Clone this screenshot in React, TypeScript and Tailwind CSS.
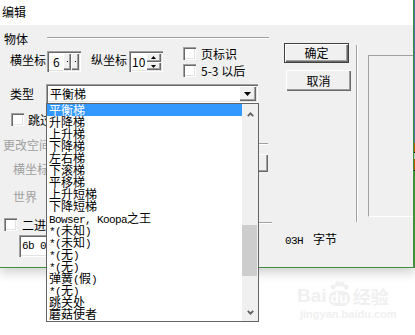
import React from "react";

const SUNKEN =
  "shadow-[inset_1px_1px_0_#a0a0a0,inset_2px_2px_0_#696969,inset_-1px_-1px_0_#ffffff,inset_-2px_-2px_0_#e3e3e3]";
const RAISED =
  "shadow-[inset_1px_1px_0_#ffffff,inset_-1px_-1px_0_#696969,inset_-2px_-2px_0_#a0a0a0]";
const MONO = "font-['Liberation_Mono',monospace] text-[11px] tracking-[-0.6px]";

function Mix({ s }: { s: string }) {
  const parts = s.match(/[\x20-\x7e]+|[^\x20-\x7e]+/g) || [];
  return (
    <>
      {parts.map((p, i) =>
        /^[\x20-\x7e]+$/.test(p) ? (
          <span key={i} className={`${MONO} whitespace-pre`}>
            {p}
          </span>
        ) : (
          <span key={i}>{p}</span>
        )
      )}
    </>
  );
}

function Check() {
  return <div className={`w-[13px] h-[13px] bg-white shrink-0 ${SUNKEN}`} />;
}

function Etch({ className }: { className: string }) {
  return (
    <div
      className={`h-[2px] border-t border-t-[#a0a0a0] border-b border-b-white ${className}`}
    />
  );
}

const ITEMS = [
  "平衡梯",
  "升降梯",
  "上升梯",
  "下降梯",
  "左右梯",
  "下滚梯",
  "平移梯",
  "上升短梯",
  "下降短梯",
  "Bowser, Koopa之王",
  "*(未知)",
  "*(未知)",
  "*(无)",
  "*(无)",
  "弹簧(假)",
  "*(无)",
  "跳关处",
  "蘑菇使者",
];

export default function App() {
  return (
    <div className="w-[415px] h-[335px] bg-white relative overflow-hidden font-['Noto_Sans_CJK_SC',sans-serif] text-[12px] text-black">
      {/* dialog */}
      <div className="flex h-[268px] w-[415px] shadow-[0_5px_10px_rgba(0,0,0,0.18)]">
        <div className="w-[413px] flex flex-col border-b border-b-[#3f8f3f]">
          {/* title */}
          <div className="h-[25px] bg-white pl-[2px] pt-[5px] leading-[14px]">编辑</div>
          {/* body */}
          <div className="flex-1 bg-[#f0f0f0] flex flex-col">
            {/* top zone */}
            <div className="h-[193px] flex items-start">
              {/* left panel */}
              <div className="w-[284px] flex flex-col">
                <div className="mt-[8px] h-[12px] flex items-start">
                  <span className="ml-[4px] leading-[12px]">物体</span>
                  <Etch className="flex-1 ml-[19px] mr-[15px] mt-[4px]" />
                </div>
                <div className="mt-[2px] h-[30px] flex items-start">
                  <span className="ml-[10px] mt-[7px] leading-[12px]">横坐标</span>
                  <div className={`ml-[1px] mt-[4px] w-[34px] h-[21px] bg-white flex items-center ${SUNKEN}`}>
                    <span className="ml-[6px] flex-1 leading-[12px]">6</span>
                    <div className="flex h-[17px] mr-[2px]">
                      <div className={`w-[8px] h-full bg-[#f0f0f0] flex items-center justify-center ${RAISED}`}>
                        <div className="w-[1px] h-[1px] bg-black" />
                      </div>
                      <div className={`w-[8px] h-full bg-[#f0f0f0] flex items-center justify-center ${RAISED}`}>
                        <div className="w-[1px] h-[1px] bg-black" />
                      </div>
                    </div>
                  </div>
                  <span className="ml-[10px] mt-[7px] leading-[12px]">纵坐标</span>
                  <div className={`ml-[2px] mt-[4px] w-[34px] h-[21px] bg-white flex items-center ${SUNKEN}`}>
                    <span className="ml-[3px] flex-1 leading-[12px]">10</span>
                    <div className="flex flex-col w-[15px] h-[17px] mr-[2px]">
                      <div className={`h-[9px] bg-[#f0f0f0] flex items-center justify-center ${RAISED}`}>
                        <svg width="5" height="3" viewBox="0 0 5 3">
                          <polygon points="0,3 5,3 2.5,0" fill="#000" />
                        </svg>
                      </div>
                      <div className={`h-[8px] bg-[#f0f0f0] flex items-center justify-center ${RAISED}`}>
                        <svg width="5" height="3" viewBox="0 0 5 3">
                          <polygon points="0,0 5,0 2.5,3" fill="#000" />
                        </svg>
                      </div>
                    </div>
                  </div>
                  <div className="ml-[20px] flex flex-col">
                    <div className="h-[13px] flex items-center">
                      <Check />
                      <span className="ml-[5px] leading-[13px]">页标识</span>
                    </div>
                    <div className="mt-[4px] h-[13px] flex items-center">
                      <Check />
                      <span className="ml-[5px] leading-[13px]">5-3 以后</span>
                    </div>
                  </div>
                </div>
                <div className="mt-[7px] h-[19px] flex items-center">
                  <span className="ml-[10px] leading-[12px]">类型</span>
                  <div className={`ml-[12px] w-[212px] h-[19px] bg-white flex items-center ${SUNKEN}`}>
                    <span className="ml-[4px] flex-1 leading-[12px]">平衡梯</span>
                    <div className={`w-[17px] h-[15px] mr-[2px] bg-[#f0f0f0] flex items-center justify-center ${RAISED}`}>
                      <svg width="7" height="4" viewBox="0 0 7 4">
                        <polygon points="0,0 7,0 3.5,4" fill="#000" />
                      </svg>
                    </div>
                  </div>
                </div>
                <div className="mt-[10px] h-[13px] flex items-center">
                  <div className="ml-[11px]">
                    <Check />
                  </div>
                  <span className="ml-[4px] leading-[13px] whitespace-nowrap">跳过此物体</span>
                </div>
                <div className="mt-[13px] h-[12px] flex items-start">
                  <span className="ml-[3px] leading-[12px] text-[#a0a0a0] whitespace-nowrap">更改空间位置</span>
                  <Etch className="flex-1 ml-[4px] mr-[16px] mt-[4px]" />
                </div>
                <div className="mt-[3px] h-[22px] flex items-start">
                  <span className="ml-[13px] mt-[9px] leading-[12px] text-[#a0a0a0]">横坐标</span>
                  <div className="flex-1" />
                  <div className={`w-[10px] h-[18px] mr-[16px] bg-[#f0f0f0] ${RAISED}`} />
                </div>
                <div className="mt-[15px] h-[12px] flex">
                  <span className="ml-[13px] leading-[12px] text-[#a0a0a0]">世界</span>
                </div>
              </div>
              {/* buttons */}
              <div className="w-[72px] flex flex-col">
                <div className="mt-[18px] w-[65px] h-[20px] border border-[#404040] bg-[#f0f0f0] flex items-center justify-center leading-[12px] shadow-[inset_1px_1px_0_#ffffff,inset_-1px_-1px_0_#696969,inset_-2px_-2px_0_#a0a0a0]">
                  确定
                </div>
                <div className={`mt-[7px] ml-[2px] w-[65px] h-[21px] bg-[#f0f0f0] flex items-center justify-center leading-[12px] ${RAISED}`}>
                  取消
                </div>
              </div>
              {/* separator */}
              <div className="w-[2px] mt-[20px] h-[177px] border-l border-l-[#a0a0a0] border-r border-r-white" />
              {/* right group */}
              <div className="flex-1 ml-[10px] mt-[30px] h-[162px] border-t border-t-[#a0a0a0] border-l border-l-[#a0a0a0] border-b border-b-white" />
            </div>
            {/* bottom zone */}
            <div className="flex flex-col">
              <div className="h-[13px] flex items-start">
                <div className="ml-[4px]">
                  <Check />
                </div>
                <span className="ml-[5px] leading-[13px] whitespace-nowrap">二进制数据</span>
                <Etch className="flex-1 ml-[4px] mr-[141px] mt-[4px]" />
              </div>
              <div className="mt-[4px] flex items-start">
                <div className={`ml-[19px] w-[230px] h-[22px] bg-white flex items-center ${SUNKEN}`}>
                  <span className={`ml-[3px] ${MONO} leading-[12px] whitespace-pre`}>6b 03 00 00</span>
                </div>
                <div className="ml-[36px] mt-[-2px] flex items-baseline leading-[12px]">
                  <span className={`${MONO}`}>03H</span>
                  <span className="ml-[10px]">字节</span>
                </div>
              </div>
            </div>
          </div>
        </div>
        <div className="w-[1px] h-[268px] bg-[#3f8f3f]" />
        <div className="w-[1px] h-[268px] flex flex-col">
          <div className="h-[143px] bg-[#4a6fa5]" />
          <div className="h-[9px] bg-[#c05010]" />
          <div className="h-[1px] bg-black" />
          <div className="h-[6px] bg-[#c8c8c8]" />
          <div className="h-[11px] bg-[#c05010]" />
          <div className="h-[1px] bg-black" />
          <div className="flex-1 bg-[#3f8f3f]" />
        </div>
      </div>

      {/* watermark */}
      <div className="ml-[297px] mt-[12px] flex flex-col text-[#f0f0f0] font-['Liberation_Sans',sans-serif]">
        <div className="flex items-end h-[26px]">
          <span className="text-[19px] font-bold leading-[20px]">Bai</span>
          <div className="relative flex flex-col items-center ml-[2px]">
            <svg width="20" height="10" viewBox="0 0 20 10">
              <circle cx="4" cy="6" r="2.5" fill="#f0f0f0" />
              <circle cx="8.5" cy="3" r="2.5" fill="#f0f0f0" />
              <circle cx="13" cy="3" r="2.5" fill="#f0f0f0" />
              <circle cx="17" cy="6" r="2.5" fill="#f0f0f0" />
            </svg>
            <span className="rounded-[7px] bg-[#f0f0f0] text-white text-[14px] font-bold leading-[15px] px-[2px]">du</span>
          </div>
          <span className="ml-[3px] text-[18px] font-bold leading-[20px] font-['Noto_Sans_CJK_SC',sans-serif]">经验</span>
        </div>
        <span className="mt-[2px] ml-[3px] text-[11px] leading-[12px] font-bold">jingyan.baidu.com</span>
      </div>

      {/* dropdown list overlay */}
      <div className="absolute left-[46px] top-[103px] w-[213px] h-[219px] border border-[#646464] bg-white flex">
        <div className="flex-1 flex flex-col overflow-hidden">
          {ITEMS.map((t, i) => (
            <div
              key={i}
              className={`h-[12px] leading-[12px] pl-[2px] whitespace-nowrap ${
                i === 0 ? "bg-[#3399ff] text-white" : ""
              }`}
            >
              <Mix s={t} />
            </div>
          ))}
        </div>
        <div className="w-[16px] bg-[#f0f0f0] flex flex-col">
          <div className="h-[17px] pt-[8px] flex justify-center">
            <svg width="7" height="5" viewBox="0 0 7 5">
              <polyline points="0.8,4.2 3.5,1.3 6.2,4.2" fill="none" stroke="#606060" strokeWidth="1.7" />
            </svg>
          </div>
          <div className="mt-[104px] w-[15px] h-[51px] bg-[#cdcdcd]" />
          <div className="flex-1" />
          <div className="h-[17px] pt-[6px] flex justify-center">
            <svg width="7" height="5" viewBox="0 0 7 5">
              <polyline points="0.8,0.8 3.5,3.7 6.2,0.8" fill="none" stroke="#606060" strokeWidth="1.7" />
            </svg>
          </div>
        </div>
      </div>
    </div>
  );
}
